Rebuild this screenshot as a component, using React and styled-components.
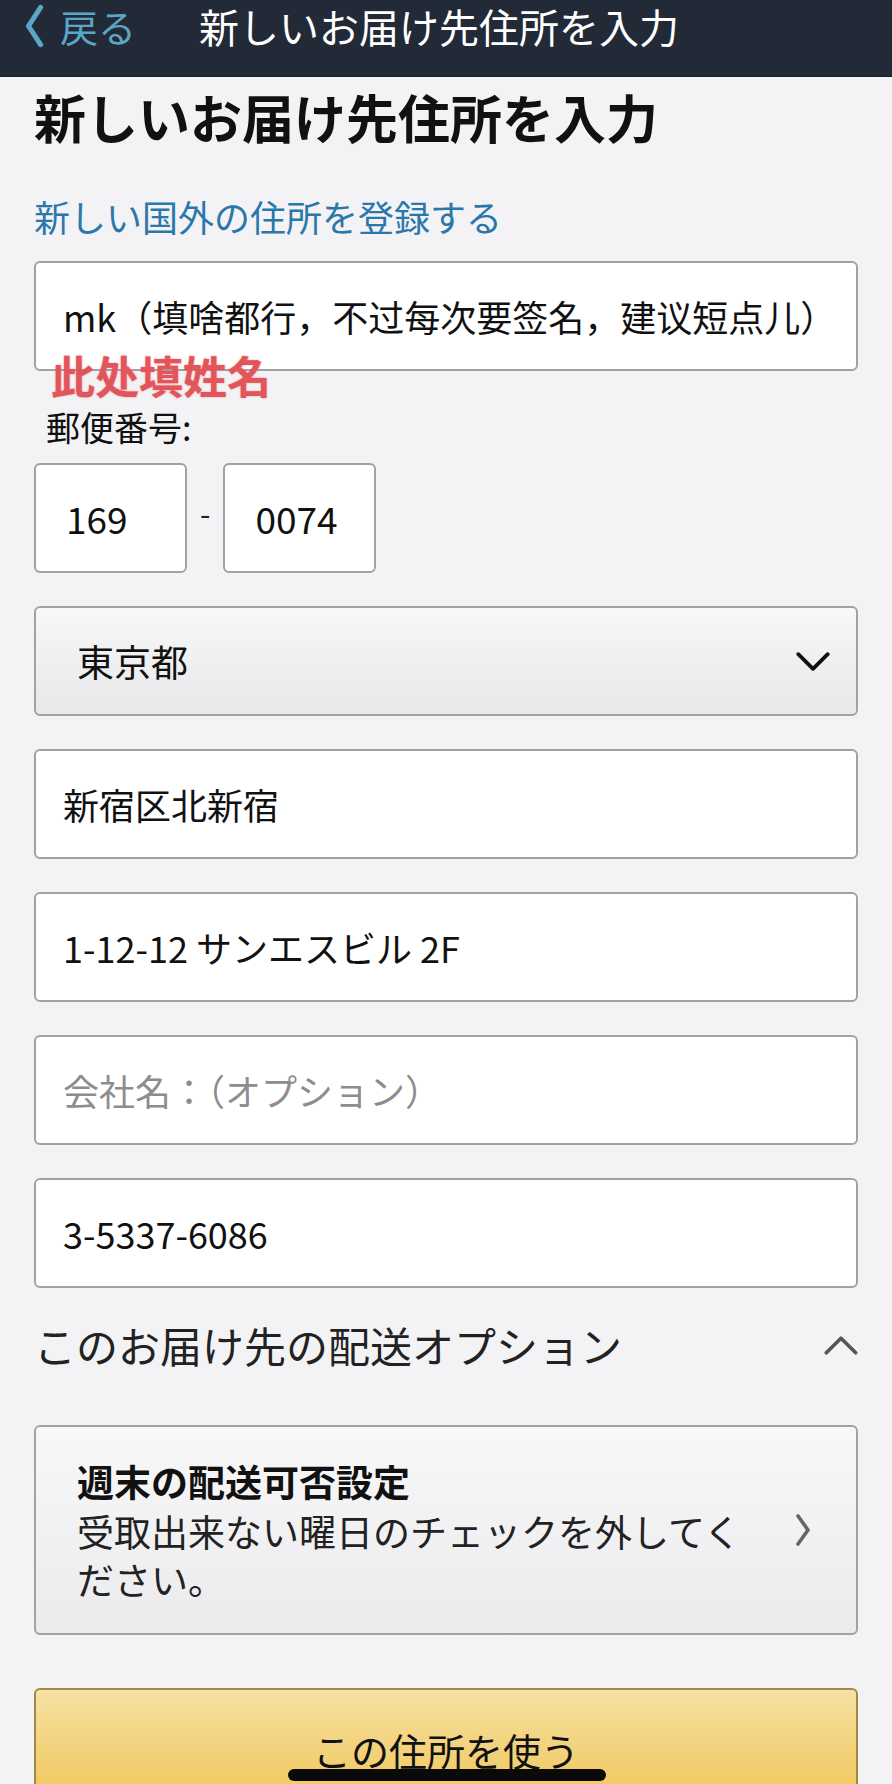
import React from "react";
import styled, { createGlobalStyle } from "styled-components";

const jp = `"Noto Sans CJK JP", "Noto Sans", sans-serif`;

const GlobalStyle = createGlobalStyle`
  html, body {
    margin: 0;
    padding: 0;
    background: #f3f3f5;
    overflow: hidden;
  }
  body {
    font-family: ${jp};
    color: #111;
  }
`;

const Page = styled.div`
  width: 892px;
  min-height: 1784px;
  background: #f3f3f5;
`;

const TopBar = styled.div`
  height: 77px;
  background: #232a37;
  display: flex;
  align-items: flex-start;
  padding: 4px 0 0 20px;
  box-sizing: border-box;
  border-bottom: 1px solid #1b202a;
`;

const Back = styled.div`
  display: flex;
  align-items: center;
  gap: 12px;
  color: #5aa6c8;
  font-size: 38px;
  line-height: 44px;
  width: 179px;
  flex-shrink: 0;
`;

const BarTitle = styled.div`
  color: #fff;
  font-size: 40px;
  line-height: 44px;
`;

const Content = styled.div`
  padding: 10px 34px 0;
  display: flex;
  flex-direction: column;
`;

const Heading = styled.h1`
  margin: 0;
  font-size: 52px;
  line-height: 60px;
  font-weight: 700;
  color: #111;
`;

const LinkText = styled.a`
  margin-top: 48px;
  font-size: 36px;
  line-height: 42px;
  color: #2a78ab;
  text-decoration: none;
`;

const Field = styled.div`
  height: 110px;
  box-sizing: border-box;
  border: 2px solid #a2a2a5;
  border-radius: 6px;
  background: #fff;
  display: flex;
  align-items: center;
  padding: 0 ${(p) => p.$pad || 27}px;
  font-size: 36px;
  color: ${(p) => (p.$placeholder ? "#8d8d90" : "#111")};
  margin-top: ${(p) => p.$top || 0}px;
  white-space: nowrap;
  overflow: hidden;
`;

const Note = styled.div`
  position: relative;
  margin: -21px 0 0 17px;
  font-size: 44px;
  line-height: 50px;
  font-weight: 700;
  color: #e2555a;
  text-shadow: 0 0 2px rgba(226, 85, 90, 0.6);
`;

const Label = styled.div`
  margin: 7px 0 0 12px;
  font-size: 34px;
  line-height: 40px;
  color: #111;
`;

const ZipRow = styled.div`
  margin-top: 16px;
  display: flex;
  align-items: center;
  gap: 13px;
`;

const ZipBox = styled(Field)`
  width: 153px;
  font-size: 37px;
  padding: 0 30px;
`;

const Dash = styled.span`
  font-size: 30px;
  color: #222;
  margin-top: -12px;
`;

const Select = styled(Field)`
  margin-top: 33px;
  justify-content: space-between;
  padding: 0 26px 0 41px;
  background: linear-gradient(#f8f8f9, #ececee 70%, #e9e9eb);
  font-size: 37px;
`;

const OptionsRow = styled.div`
  margin-top: 32px;
  display: flex;
  justify-content: space-between;
  align-items: center;
  font-size: 42px;
  line-height: 50px;
  color: #222;
`;

const WeekendCard = styled.div`
  margin-top: 55px;
  height: 210px;
  box-sizing: border-box;
  border: 2px solid #a2a2a5;
  border-radius: 6px;
  background: linear-gradient(#f8f8f9, #ebebed);
  display: flex;
  align-items: center;
  padding: 0 44px 0 41px;
`;

const CardText = styled.div`
  flex: 1;
  font-size: 37px;
  line-height: 48px;
  color: #222;
  padding-right: 36px;
`;

const CardTitle = styled.div`
  font-weight: 700;
  color: #111;
  margin-bottom: 2px;
`;

const UseButton = styled.button`
  margin-top: 53px;
  height: 122px;
  width: 100%;
  border: 2px solid #a08a45;
  border-radius: 6px;
  background: linear-gradient(#f6e2a4, #f3d27c 50%, #f0c652);
  font-family: ${jp};
  font-size: 38px;
  color: #111;
  padding: 0;
`;

const HomeBar = styled.div`
  position: fixed;
  left: 288px;
  bottom: 3px;
  width: 318px;
  height: 12px;
  border-radius: 6px;
  background: #0a0a0a;
`;

const Chevron = ({ dir, size, color, stroke }) => {
  const paths = {
    left: "M15 3 L4 20 L15 37",
    down: "M2 3 L16 17 L30 3",
    up: "M2 17 L16 3 L30 17",
    right: "M3 2 L13 16 L3 30",
  };
  const box = {
    left: "0 0 18 40",
    down: "0 0 32 20",
    up: "0 0 32 20",
    right: "0 0 16 32",
  };
  return (
    <svg width={size[0]} height={size[1]} viewBox={box[dir]} fill="none">
      <path
        d={paths[dir]}
        stroke={color}
        strokeWidth={stroke}
        strokeLinecap="round"
        strokeLinejoin="round"
      />
    </svg>
  );
};

export default function App() {
  return (
    <Page>
      <GlobalStyle />
      <TopBar>
        <Back>
          <Chevron dir="left" size={[28, 44]} color="#5aa6c8" stroke={4.6} />
          戻る
        </Back>
        <BarTitle>新しいお届け先住所を入力</BarTitle>
      </TopBar>
      <Content>
        <Heading>新しいお届け先住所を入力</Heading>
        <LinkText>新しい国外の住所を登録する</LinkText>
        <Field $top={24}>mk（填啥都行，不过每次要签名，建议短点儿）</Field>
        <Note>此处填姓名</Note>
        <Label>郵便番号:</Label>
        <ZipRow>
          <ZipBox>169</ZipBox>
          <Dash>-</Dash>
          <ZipBox>0074</ZipBox>
        </ZipRow>
        <Select>
          <span>東京都</span>
          <Chevron dir="down" size={[34, 21]} color="#111" stroke={3.6} />
        </Select>
        <Field $top={33}>新宿区北新宿</Field>
        <Field $top={33}>1-12-12 サンエスビル 2F</Field>
        <Field $top={33} $placeholder>
          会社名：（オプション）
        </Field>
        <Field $top={33}>3-5337-6086</Field>
        <OptionsRow>
          <span>このお届け先の配送オプション</span>
          <Chevron dir="up" size={[34, 21]} color="#555" stroke={3.4} />
        </OptionsRow>
        <WeekendCard>
          <CardText>
            <CardTitle>週末の配送可否設定</CardTitle>
            受取出来ない曜日のチェックを外してください。
          </CardText>
          <Chevron dir="right" size={[18, 32]} color="#666" stroke={3.6} />
        </WeekendCard>
        <UseButton>この住所を使う</UseButton>
      </Content>
      <HomeBar />
    </Page>
  );
}
